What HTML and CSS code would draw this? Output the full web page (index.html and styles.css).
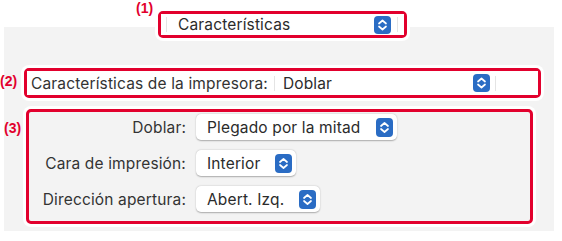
FILE: index.html
```html
<!DOCTYPE html>
<html>
	<head>
		<title>Características</title>
		<meta charset="UTF-8">
		<meta name="viewport" content="width=device-width, initial-scale=1.0">
		<link rel="stylesheet" href="styles.css">
	</head>
	<body>
		<div class="sheet">

			<!-- (1) menú de panel -->
			<div class="mark mark-1">
				<span class="tag tag-1">(1)</span>
				<div class="bar">
					<span class="sep"></span>
					<span class="bar-value">Características</span>
					<svg class="stepper" width="17" height="18" viewBox="0 0 17 18">
						<rect x="0" y="0" width="17" height="18" rx="4" fill="#2a6cc4"/>
						<path d="M5 7.5 L8.5 4.5 L12 7.5 M5 10.5 L8.5 13.5 L12 10.5" fill="none" stroke="#fff" stroke-width="1.7" stroke-linecap="round" stroke-linejoin="round"/>
					</svg>
					<span class="sep"></span>
				</div>
			</div>

			<!-- (2) características de la impresora -->
			<div class="mark mark-2">
				<span class="tag tag-2">(2)</span>
				<div class="bar">
					<span class="bar-label">Características de la impresora:</span>
					<span class="sep"></span>
					<span class="bar-value">Doblar</span>
					<svg class="stepper" width="17" height="18" viewBox="0 0 17 18">
						<rect x="0" y="0" width="17" height="18" rx="4" fill="#2a6cc4"/>
						<path d="M5 7.5 L8.5 4.5 L12 7.5 M5 10.5 L8.5 13.5 L12 10.5" fill="none" stroke="#fff" stroke-width="1.7" stroke-linecap="round" stroke-linejoin="round"/>
					</svg>
					<span class="sep"></span>
				</div>
			</div>

			<!-- (3) opciones -->
			<div class="mark mark-3">
				<span class="tag tag-3">(3)</span>
				<div class="options">
					<span class="opt-label">Doblar:</span>
					<div class="popup">
						<span>Plegado por la mitad</span>
						<svg class="stepper" width="17" height="19" viewBox="0 0 17 19">
							<rect x="0" y="0" width="17" height="19" rx="4" fill="#2a6cc4"/>
							<path d="M5 8 L8.5 5 L12 8 M5 11 L8.5 14 L12 11" fill="none" stroke="#fff" stroke-width="1.7" stroke-linecap="round" stroke-linejoin="round"/>
						</svg>
					</div>

					<span class="opt-label">Cara de impresión:</span>
					<div class="popup">
						<span>Interior</span>
						<svg class="stepper" width="17" height="19" viewBox="0 0 17 19">
							<rect x="0" y="0" width="17" height="19" rx="4" fill="#2a6cc4"/>
							<path d="M5 8 L8.5 5 L12 8 M5 11 L8.5 14 L12 11" fill="none" stroke="#fff" stroke-width="1.7" stroke-linecap="round" stroke-linejoin="round"/>
						</svg>
					</div>

					<span class="opt-label">Dirección apertura:</span>
					<div class="popup">
						<span>Abert. Izq.</span>
						<svg class="stepper" width="17" height="19" viewBox="0 0 17 19">
							<rect x="0" y="0" width="17" height="19" rx="4" fill="#2a6cc4"/>
							<path d="M5 8 L8.5 5 L12 8 M5 11 L8.5 14 L12 11" fill="none" stroke="#fff" stroke-width="1.7" stroke-linecap="round" stroke-linejoin="round"/>
						</svg>
					</div>
				</div>
			</div>

		</div>
	</body>
</html>
```

FILE: styles.css
```css
* {
	margin: 0;
	padding: 0;
	box-sizing: border-box;
}

body {
	width: 562px;
	height: 241px;
	background-color: #fff;
	font-family: Inter, "Noto Sans", sans-serif;
	font-size: 15.5px;
	letter-spacing: 0.15px;
	color: #2b2b2b;
	overflow: hidden;
}

/* fondo del panel: blanco arriba, gris debajo */
.sheet {
	margin: 0 8px 0 4px;
	height: 231px;
	padding-top: 11px;
	background: linear-gradient(to bottom, #fff 0, #fff 27px, #f3f3f3 27px);
}

/* recuadro rojo de anotación */
.mark {
	position: relative;
	border: 3px solid #e2002d;
	border-radius: 5px;
	box-shadow: 0 0 0 3px #fff;
}

.mark-1 {
	margin-left: 154px;
	width: 249px;
	height: 27px;
}

.mark-2 {
	margin-top: 30px;
	margin-left: 20px;
	width: 517px;
	height: 30px;
}

.mark-3 {
	margin-top: 11px;
	margin-left: 22px;
	width: 507px;
	height: 115px;
	background-color: #f3f3f3;
}

/* números (1) (2) (3) */
.tag {
	position: absolute;
	font-family: "Liberation Sans", Arial, sans-serif;
	font-weight: bold;
	font-size: 14px;
	letter-spacing: 0;
	color: #e2002d;
	line-height: 14px;
}

.tag-1 {
	left: -25px;
	top: -13px;
}

.tag-2 {
	left: -27px;
	top: 3px;
}

.tag-3 {
	left: -25px;
	top: 9px;
}

/* barra blanca con menú */
.bar {
	display: flex;
	align-items: center;
	height: 100%;
	background-color: #fff;
}

.sep {
	width: 1px;
	height: 15px;
	background-color: #e4e4e4;
}

.mark-1 .bar {
	padding: 0 6px 0 5px;
}

.mark-1 .bar-value {
	margin-left: 11px;
	flex: 1;
}

.mark-1 .stepper {
	margin-right: 6px;
}

.mark-2 .bar {
	padding: 0 42px 0 4px;
}

.mark-2 .bar-label {
	color: #333;
	margin-right: 6px;
}

.mark-2 .bar-value {
	margin-left: 8px;
	flex: 1;
}

.mark-2 .stepper {
	margin-right: 5px;
}

/* filas de opciones */
.options {
	display: grid;
	grid-template-columns: 157px auto;
	column-gap: 10px;
	row-gap: 10px;
	justify-content: start;
	align-items: center;
	padding-top: 2px;
}

.opt-label {
	text-align: right;
	color: #333;
}

.popup {
	justify-self: start;
	display: flex;
	align-items: center;
	gap: 15px;
	height: 26px;
	padding: 0 4px 0 11px;
	background-color: #fff;
	border-radius: 5px;
	box-shadow: 0 0.5px 1.5px rgba(0, 0, 0, 0.3);
}
```
